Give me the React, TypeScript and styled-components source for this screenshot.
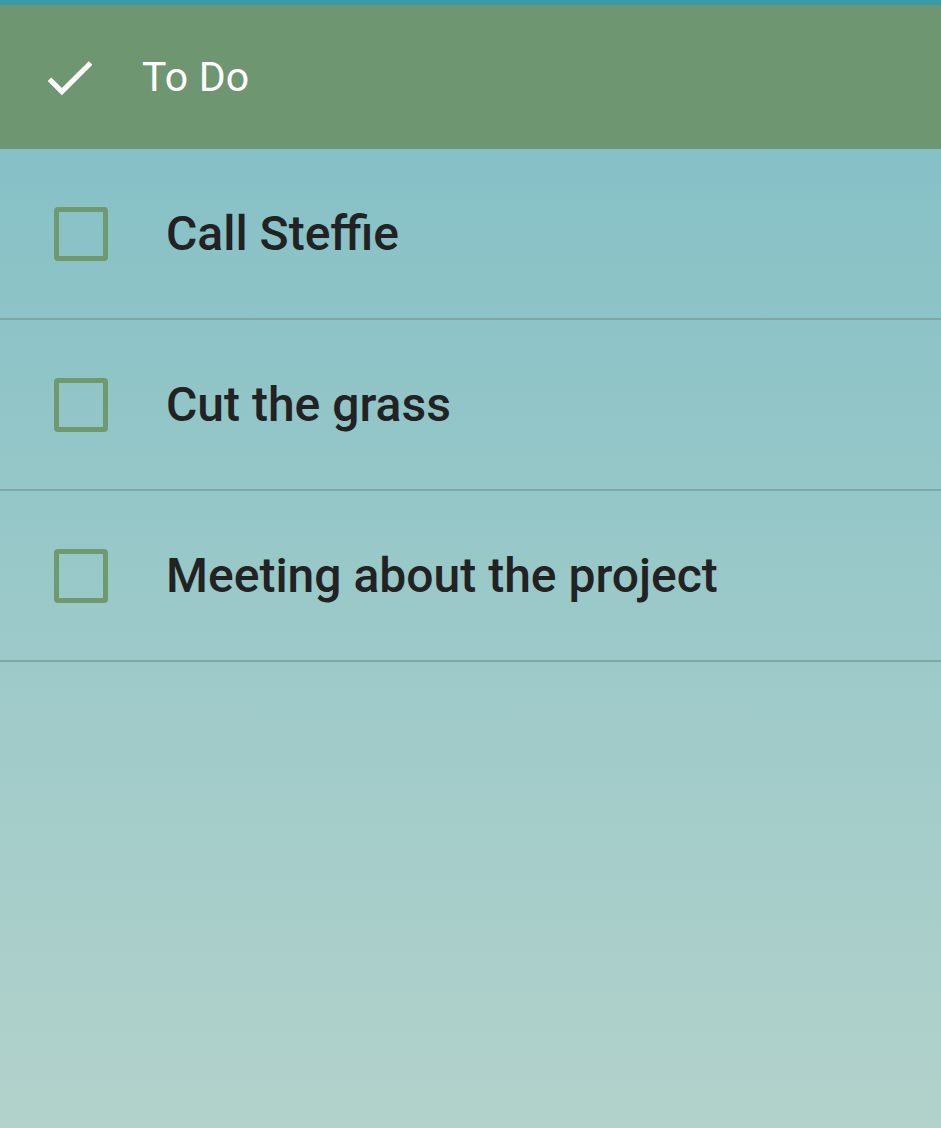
import React from 'react';
import styled, { createGlobalStyle } from 'styled-components';

const GlobalStyle = createGlobalStyle`
  html, body {
    margin: 0;
    padding: 0;
  }
  body {
    font-family: Roboto, "Noto Sans", sans-serif;
  }
`;

const todos = ['Call Steffie', 'Cut the grass', 'Meeting about the project'];

const App = () => {
  return (
    <Page>
      <GlobalStyle />
      <TopStripe />
      <Header>
        <CheckIcon viewBox="0 0 24 24">
          <path d="M9 16.17L4.83 12l-1.42 1.41L9 19 21 7l-1.41-1.41z" fill="#ffffff" />
        </CheckIcon>
        <Title>To Do</Title>
      </Header>
      <List>
        {todos.map((todo) => (
          <Row key={todo}>
            <Box />
            <Label>{todo}</Label>
          </Row>
        ))}
      </List>
    </Page>
  );
};

export default App;

const Page = styled.div`
  display: flex;
  flex-direction: column;
  width: 941px;
  height: 1128px;
  overflow: hidden;
  background: linear-gradient(180deg, #7fbec6 0%, #b2d2cb 100%);
`;

const TopStripe = styled.div`
  height: 5px;
  background-color: #3b9aa8;
`;

const Header = styled.div`
  display: flex;
  align-items: center;
  height: 144px;
  padding-left: 39px;
  background-color: #6e9670;
`;

const CheckIcon = styled.svg`
  width: 61px;
  height: 61px;
`;

const Title = styled.div`
  margin-left: 42px;
  font-size: 41px;
  color: #ffffff;
  letter-spacing: 0.2px;
`;

const List = styled.div`
  display: flex;
  flex-direction: column;
`;

const Row = styled.div`
  display: flex;
  align-items: center;
  height: 169px;
  padding-left: 54px;
  border-bottom: 2px solid #7fa7a8;
`;

const Box = styled.div`
  box-sizing: border-box;
  width: 54px;
  height: 54px;
  border: 5px solid #6f9a6d;
  border-radius: 4px;
`;

const Label = styled.div`
  margin-left: 58px;
  font-size: 48px;
  font-weight: 500;
  color: #222222;
`;
